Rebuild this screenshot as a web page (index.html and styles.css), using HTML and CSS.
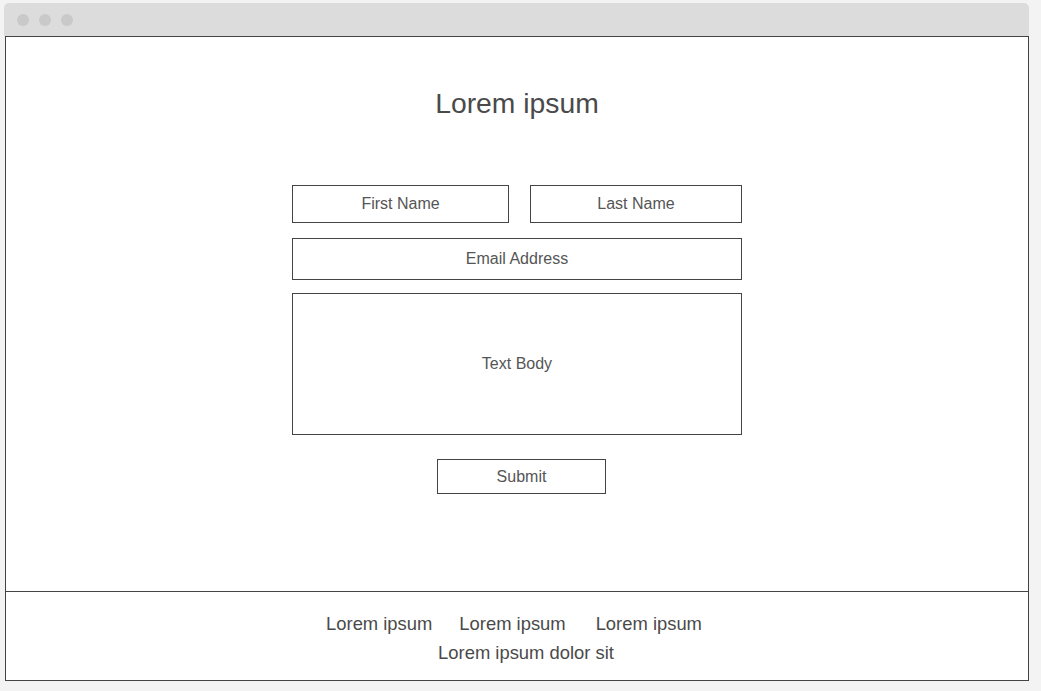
FILE: index.html
```html
<!DOCTYPE html>
<html>
<head>
<meta charset="utf-8">
<link rel="stylesheet" href="styles.css">
</head>
<body>
<div class="window">
  <div class="titlebar">
    <span class="dot"></span><span class="dot"></span><span class="dot"></span>
  </div>
  <div class="page">
    <main class="main">
      <h1 class="title">Lorem ipsum</h1>
      <form class="form">
        <div class="row">
          <div class="field first">First Name</div>
          <div class="field last">Last Name</div>
        </div>
        <div class="field email">Email Address</div>
        <div class="field body">Text Body</div>
        <div class="submit">Submit</div>
      </form>
    </main>
    <footer class="footer">
      <div class="links">
        <span class="link">Lorem ipsum</span><span class="link mid">Lorem ipsum</span><span class="link">Lorem ipsum</span>
      </div>
      <div class="copy">Lorem ipsum dolor sit</div>
    </footer>
  </div>
</div>
</body>
</html>
```
FILE: styles.css
```css
html, body {
  margin: 0;
  padding: 0;
  background: #f3f3f3;
  font-family: "Liberation Sans", Arial, sans-serif;
}
.window {
  margin: 3px 0 0 4px;
  width: 1025px;
}
.titlebar {
  height: 33px;
  background: #dcdcdc;
  border-radius: 5px 5px 0 0;
  display: flex;
  align-items: center;
  padding-left: 13px;
  gap: 10px;
}
.dot {
  width: 12px;
  height: 12px;
  border-radius: 50%;
  background: #c9c9c9;
}
.page {
  margin-left: 1px;
  width: 1022px;
  height: 643px;
  border: 1px solid #444;
  background: #fff;
  display: flex;
  flex-direction: column;
}
.main {
  height: 554px;
  padding-top: 50px;
  box-sizing: border-box;
  display: flex;
  flex-direction: column;
  align-items: center;
}
.title {
  margin: 0;
  font-weight: normal;
  font-size: 28.3px;
  line-height: 32px;
  color: #4a4a4a;
}
.form {
  margin-top: 66px;
  width: 450px;
  display: flex;
  flex-direction: column;
}
.row {
  display: flex;
  justify-content: space-between;
}
.field, .submit {
  box-sizing: border-box;
  border: 1px solid #444;
  display: flex;
  align-items: center;
  justify-content: center;
  font-size: 16px;
  color: #555;
}
.first { width: 217px; height: 38px; }
.last { width: 212px; height: 38px; }
.email { margin-top: 15px; height: 42px; }
.body { margin-top: 13px; height: 142px; }
.submit {
  margin-top: 24px;
  margin-left: 145px;
  width: 169px;
  height: 35px;
}
.footer {
  border-top: 1px solid #444;
  flex: 1;
  padding-top: 17px;
  box-sizing: border-box;
  font-size: 18.4px;
  line-height: 29px;
  color: #4a4a4a;
  display: flex;
  flex-direction: column;
  align-items: center;
}
.links {
  display: flex;
  padding-right: 6px;
}
.link.mid {
  margin: 0 30px 0 27px;
}
.copy {
  padding-left: 18px;
}
```
